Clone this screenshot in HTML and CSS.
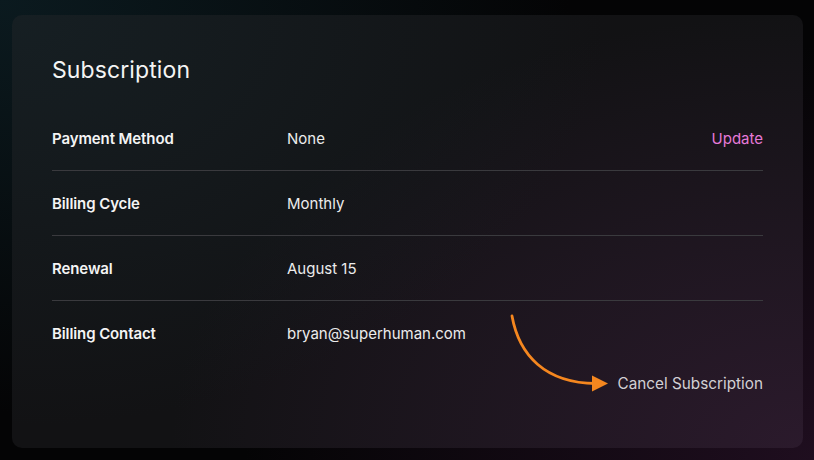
FILE: index.html
```html
<!DOCTYPE html>
<html>
<head>
<meta charset="utf-8">
<link rel="stylesheet" href="styles.css">
</head>
<body>
<div class="card">
  <h1 class="title">Subscription</h1>
  <div class="rows">
    <div class="row">
      <div class="label">Payment Method</div>
      <div class="value">None</div>
      <a class="action">Update</a>
    </div>
    <div class="row">
      <div class="label">Billing Cycle</div>
      <div class="value">Monthly</div>
    </div>
    <div class="row">
      <div class="label">Renewal</div>
      <div class="value">August 15</div>
    </div>
    <div class="row last">
      <div class="label">Billing Contact</div>
      <div class="value">bryan@superhuman.com</div>
    </div>
  </div>
  <div class="footer"><span class="cancel">Cancel Subscription</span></div>
  <svg class="arrow" width="120" height="100" viewBox="0 0 120 100">
    <path d="M5 3 C 12 42, 38 70, 89 70.5" fill="none" stroke="#f5871f" stroke-width="2.8" stroke-linecap="round"/>
    <polygon points="85,62.5 101,70.5 85,78.5" fill="#f5871f"/>
  </svg>
</div>
</body>
</html>
```
FILE: styles.css
```css
* { box-sizing: border-box; }
html, body { margin: 0; padding: 0; }
body {
  width: 814px;
  height: 460px;
  overflow: hidden;
  font-family: Inter, "Noto Sans", sans-serif;
  color: #f2f2f2;
  background:
    radial-gradient(ellipse 70% 90% at 0% 0%, #0b1a1f 0%, rgba(11,26,31,0) 100%),
    radial-gradient(ellipse 70% 90% at 100% 100%, #1f0e1f 0%, rgba(31,14,31,0) 100%),
    #040405;
  padding: 15px 11px 12px 12px;
}
.card {
  position: relative;
  height: 433px;
  border-radius: 10px;
  background:
    radial-gradient(ellipse 75% 95% at 0% 0%, #161f23 0%, rgba(22,31,35,0) 100%),
    radial-gradient(ellipse 80% 100% at 100% 100%, #2b1a2c 0%, rgba(43,26,44,0) 100%),
    #121214;
  padding: 40px 40px 0 40px;
}
.title {
  margin: 0;
  font-size: 23px;
  line-height: 30px;
  font-weight: 400;
  color: #f4f4f4;
  letter-spacing: 0.1px;
}
.rows { margin-top: 21px; }
.row {
  display: flex;
  align-items: center;
  height: 65px;
  border-bottom: 1px solid #3a3a3e;
  font-size: 15px;
  padding-top: 1px;
}
.row.last { border-bottom: none; height: 64px; }
.label {
  width: 235px;
  font-weight: 600;
  color: #f4f4f4;
  letter-spacing: -0.1px;
}
.value {
  flex: 1;
  color: #ececec;
}
.action {
  color: #e57ad8;
  font-size: 15px;
}
.footer {
  display: flex;
  justify-content: flex-end;
  margin-top: 9px;
  line-height: 20px;
}
.cancel {
  font-size: 15.3px;
  color: #d2d0d4;
}
.arrow {
  position: absolute;
  left: 495px;
  top: 298px;
}
```
